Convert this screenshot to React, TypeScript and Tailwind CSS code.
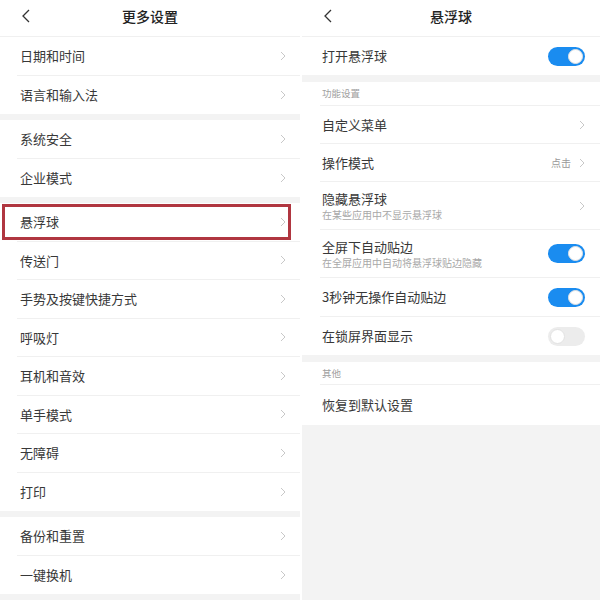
import React from "react";

const font = { fontFamily: '"Noto Sans CJK SC", "Noto Sans", sans-serif' };

const BackIcon = () => (
  <svg width="10" height="14" viewBox="0 0 10 14" fill="none">
    <polyline points="8,1 2,7 8,13" stroke="#333" strokeWidth="1.3" />
  </svg>
);

const Chevron = () => (
  <svg width="6" height="10" viewBox="0 0 6 10" fill="none">
    <polyline points="1,1 5,5 1,9" stroke="#c8c8c8" strokeWidth="1" />
  </svg>
);

const Toggle: React.FC<{ on: boolean }> = ({ on }) => (
  <div
    className={`w-[37px] h-[19px] rounded-full flex items-center px-[2px] ${
      on ? "bg-[#1a8cf0] justify-end" : "bg-[#ececec] justify-start"
    }`}
  >
    <div className="w-[15px] h-[15px] rounded-full bg-white border border-[#e2e2e2]" />
  </div>
);

const Header: React.FC<{ title: string }> = ({ title }) => (
  <>
    <div className="h-[36px] relative flex items-center justify-center pb-[4px] bg-white">
      <div className="absolute left-[21px] top-[9px]">
        <BackIcon />
      </div>
      <span className="text-[14px] font-medium text-[#222]">{title}</span>
    </div>
    <div className="h-[1px] bg-[#f0f0f0]" />
  </>
);

const Band: React.FC<{ h?: string }> = ({ h = "h-[6px]" }) => (
  <div className={`${h} bg-[#f3f3f3]`} />
);

// left list row
const LeftRow: React.FC<{ label: string; last?: boolean; marked?: boolean }> = ({
  label,
  last,
  marked,
}) => (
  <div className="relative h-[38.5px] flex flex-col bg-white">
    <div className="flex-1 flex items-center justify-between pl-[20px] pr-[14px]">
      <span className="text-[13px] text-[#383838]">{label}</span>
      <Chevron />
    </div>
    {!last && <div className="h-[1px] ml-[17px] bg-[#f0f0f0]" />}
    {marked && (
      <div className="absolute left-[2px] top-[1px] w-[289px] h-[36px] border-[3px] border-[#b03640]" />
    )}
  </div>
);

const RightRow: React.FC<{
  label: string;
  sub?: string;
  value?: string;
  toggle?: boolean;
  chevron?: boolean;
  h: string;
  last?: boolean;
}> = ({ label, sub, value, toggle, chevron, h, last }) => (
  <div className={`${h} flex flex-col bg-white`}>
    <div className="flex-1 flex items-center justify-between pl-[20px] pr-[15px]">
      <div className="flex flex-col">
        <span className="text-[13px] text-[#383838] leading-[18px]">{label}</span>
        {sub && <span className="text-[10px] text-[#a8a8a8] leading-[13px]">{sub}</span>}
      </div>
      <div className="flex items-center gap-[8px]">
        {value && <span className="text-[10px] text-[#999]">{value}</span>}
        {chevron && <Chevron />}
        {toggle !== undefined && <Toggle on={toggle} />}
      </div>
    </div>
    {!last && <div className="h-[1px] ml-[18px] bg-[#f0f0f0]" />}
  </div>
);

const Label: React.FC<{ text: string; h: string }> = ({ text, h }) => (
  <div className={`${h} flex flex-col bg-white`}>
    <div className="flex-1 flex items-center pl-[20px]">
      <span className="text-[9.5px] text-[#a0a0a0]">{text}</span>
    </div>
    <div className="h-[1px] ml-[18px] bg-[#f0f0f0]" />
  </div>
);

export default function App() {
  return (
    <div className="w-[600px] h-[600px] flex bg-white overflow-hidden" style={font}>
      {/* left: 更多设置 */}
      <div className="w-[300px] flex flex-col">
        <Header title="更多设置" />
        <LeftRow label="日期和时间" />
        <LeftRow label="语言和输入法" last />
        <Band />
        <LeftRow label="系统安全" />
        <LeftRow label="企业模式" last />
        <Band />
        <LeftRow label="悬浮球" marked />
        <LeftRow label="传送门" />
        <LeftRow label="手势及按键快捷方式" />
        <LeftRow label="呼吸灯" />
        <LeftRow label="耳机和音效" />
        <LeftRow label="单手模式" />
        <LeftRow label="无障碍" />
        <LeftRow label="打印" last />
        <Band />
        <LeftRow label="备份和重置" />
        <LeftRow label="一键换机" last />
        <div className="flex-1 bg-[#f3f3f3]" />
      </div>

      <div className="w-[2px] bg-white" />

      {/* right: 悬浮球 */}
      <div className="flex-1 flex flex-col bg-[#f3f3f3]">
        <Header title="悬浮球" />
        <RightRow label="打开悬浮球" toggle h="h-[38px]" last />
        <Band h="h-[7px]" />
        <Label text="功能设置" h="h-[24px]" />
        <RightRow label="自定义菜单" chevron h="h-[38px]" />
        <RightRow label="操作模式" value="点击" chevron h="h-[38px]" />
        <RightRow label="隐藏悬浮球" sub="在某些应用中不显示悬浮球" chevron h="h-[48px]" />
        <RightRow label="全屏下自动贴边" sub="在全屏应用中自动将悬浮球贴边隐藏" toggle h="h-[48px]" />
        <RightRow label="3秒钟无操作自动贴边" toggle h="h-[39px]" />
        <RightRow label="在锁屏界面显示" toggle={false} h="h-[38px]" last />
        <Band h="h-[7px]" />
        <Label text="其他" h="h-[23px]" />
        <RightRow label="恢复到默认设置" h="h-[40px]" last />
      </div>
    </div>
  );
}
